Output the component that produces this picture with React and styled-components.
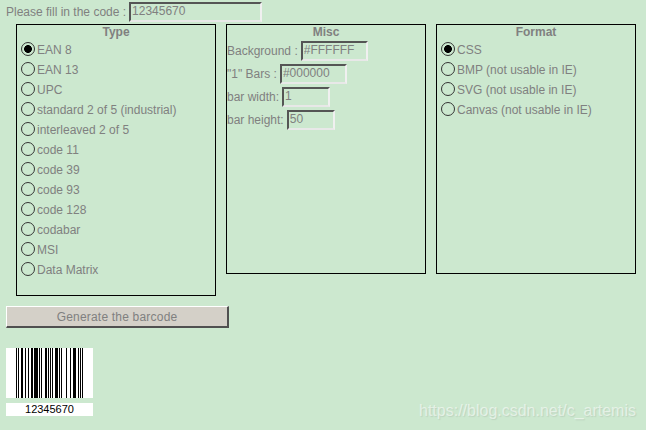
import React from "react";
import styled, { createGlobalStyle } from "styled-components";

const GlobalStyle = createGlobalStyle`
  html, body {
    margin: 0;
    background: #cce8cf;
  }
  body {
    font-family: "Liberation Sans", Arial, sans-serif;
    font-size: 12px;
    color: #808080;
  }
`;

const Page = styled.div`
  position: relative;
  width: 646px;
  height: 430px;
  box-sizing: border-box;
  padding: 2px 6px 0;
  overflow: hidden;
`;

const CodeRow = styled.div`
  display: flex;
  align-items: center;
  height: 20px;
  gap: 3px;
`;

const TextField = styled.input`
  box-sizing: border-box;
  width: ${(p) => p.$width}px;
  height: 20px;
  margin: 0;
  padding: 0 1px 3px;
  border: 2px solid;
  border-color: #555555 #e8e8e8 #e8e8e8 #555555;
  border-right-color: #f0f0f0;
  background: #cce8cf;
  color: #808080;
  font: 12px "Liberation Sans", Arial, sans-serif;
  outline: none;
`;

const Panels = styled.div`
  display: flex;
  align-items: flex-start;
  gap: 10px;
  margin: 2px 0 0 10px;
`;

const Panel = styled.div`
  box-sizing: border-box;
  width: 200px;
  height: ${(p) => p.$height}px;
  border: 1px solid #000000;
`;

const PanelTitle = styled.div`
  height: 15px;
  line-height: 15px;
  text-align: center;
  font-weight: bold;
`;

const RadioRow = styled.label`
  display: flex;
  align-items: center;
  height: 20px;
  padding-left: 4px;
  gap: 2px;
`;

const RadioInput = styled.input`
  appearance: none;
  box-sizing: border-box;
  position: relative;
  top: -1px;
  width: 14px;
  height: 14px;
  margin: 0;
  border: 1.4px solid #333333;
  border-radius: 50%;
  background: transparent;

  &:checked {
    background: radial-gradient(circle, #000000 0 3.6px, transparent 4.2px);
  }
`;

const MiscRow = styled.div`
  display: flex;
  align-items: center;
  height: 20px;
  margin-bottom: 3px;
  padding-left: 0;
  gap: ${(p) => p.$gap}px;
`;

const MiscRows = styled.div`
  margin-top: 1px;
`;

const GenerateButton = styled.button`
  display: block;
  box-sizing: border-box;
  width: 223px;
  height: 22px;
  margin: 10px 0 0;
  padding: 0;
  border: 2px solid;
  border-color: #ffffff #505050 #505050 #ffffff;
  border-top-width: 1px;
  border-left-width: 1px;
  background: #d4d0c8;
  color: #808080;
  font: 12px "Liberation Sans", Arial, sans-serif;
  letter-spacing: 0.2px;
`;

const Barcode = styled.div`
  width: 87px;
  margin-top: 20px;
`;

const BarsBox = styled.div`
  display: block;
  height: 50px;
  background: #ffffff;
  line-height: 0;
`;

const BarCaption = styled.div`
  height: 13px;
  margin-top: 5px;
  background: #ffffff;
  color: #000000;
  font-size: 11px;
  line-height: 13px;
  text-align: center;
`;

const Watermark = styled.div`
  position: absolute;
  right: 10px;
  bottom: 9px;
  color: rgba(255, 255, 255, 0.55);
  font-size: 16px;
  line-height: 20px;
  text-shadow: 1px 1px 1px rgba(120, 120, 120, 0.18);
`;

const typeOptions = [
  "EAN 8",
  "EAN 13",
  "UPC",
  "standard 2 of 5 (industrial)",
  "interleaved 2 of 5",
  "code 11",
  "code 39",
  "code 93",
  "code 128",
  "codabar",
  "MSI",
  "Data Matrix",
];

const formatOptions = [
  "CSS",
  "BMP (not usable in IE)",
  "SVG (not usable in IE)",
  "Canvas (not usable in IE)",
];

const miscFields = [
  { label: "Background :", value: "#FFFFFF", width: 67, gap: 3 },
  { label: '"1" Bars :', value: "#000000", width: 67, gap: 3 },
  { label: "bar width:", value: "1", width: 48, gap: 3 },
  { label: "bar height:", value: "50", width: 48, gap: 3 },
];

// EAN-8 pattern for 12345670, 1px per module
const pattern =
  "101" +
  "0011001" + "0010011" + "0111101" + "0100011" +
  "01010" +
  "1001110" + "1010000" + "1000100" + "1110010" +
  "101";

const RadioGroup = ({ name, options }) =>
  options.map((text, i) => (
    <RadioRow key={text}>
      <RadioInput type="radio" name={name} defaultChecked={i === 0} />
      {text}
    </RadioRow>
  ));

export default function App() {
  return (
    <Page>
      <GlobalStyle />
      <CodeRow>
        Please fill in the code :
        <TextField $width={133} defaultValue="12345670" />
      </CodeRow>
      <Panels>
        <Panel $height={272}>
          <PanelTitle>Type</PanelTitle>
          <RadioGroup name="type" options={typeOptions} />
        </Panel>
        <Panel $height={250}>
          <PanelTitle>Misc</PanelTitle>
          <MiscRows>
            {miscFields.map((f) => (
              <MiscRow key={f.label} $gap={f.gap}>
                {f.label}
                <TextField $width={f.width} defaultValue={f.value} />
              </MiscRow>
            ))}
          </MiscRows>
        </Panel>
        <Panel $height={250}>
          <PanelTitle>Format</PanelTitle>
          <RadioGroup name="format" options={formatOptions} />
        </Panel>
      </Panels>
      <GenerateButton>Generate the barcode</GenerateButton>
      <Barcode>
        <BarsBox>
          <svg width="87" height="50" shapeRendering="crispEdges">
            {pattern.split("").map((bit, i) =>
              bit === "1" ? <rect key={i} x={10 + i} y="0" width="1" height="50" fill="#000" /> : null
            )}
          </svg>
        </BarsBox>
        <BarCaption>12345670</BarCaption>
      </Barcode>
      <Watermark>https://blog.csdn.net/c_artemis</Watermark>
    </Page>
  );
}
